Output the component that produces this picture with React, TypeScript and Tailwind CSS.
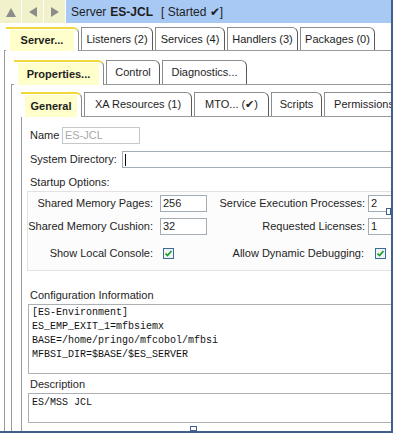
const tabRow1 = [
  { label: 'Server...', w: 'w-[73px]', selected: true },
  { label: 'Listeners (2)', w: 'w-[72px]' },
  { label: 'Services (4)', w: 'w-[70px]' },
  { label: 'Handlers (3)', w: 'w-[71px]' },
  { label: 'Packages (0)', w: 'w-[75px]' },
];

const tabRow2 = [
  { label: 'Properties...', w: 'w-[90px]', selected: true },
  { label: 'Control', w: 'w-[54px]' },
  { label: 'Diagnostics...', w: 'w-[85px]' },
];

const tabRow3 = [
  { label: 'General', w: 'w-[61px]', selected: true },
  { label: 'XA Resources (1)', w: 'w-[108px]' },
  { label: 'MTO... (✔)', w: 'w-[75px]' },
  { label: 'Scripts', w: 'w-[51px]' },
  { label: 'Permissions', w: 'w-[80px]' },
];

const configLines = [
  '[ES-Environment]',
  'ES_EMP_EXIT_1=mfbsiemx',
  'BASE=/home/pringo/mfcobol/mfbsi',
  'MFBSI_DIR=$BASE/$ES_SERVER',
];

type TabDef = { label: string; w: string; selected?: boolean };

function Tab({ tab }: { tab: TabDef }) {
  if (tab.selected) {
    return (
      <div
        className={`${tab.w} relative z-10 -mb-px shrink-0 bg-white border-t-2 border-t-[#efd83a] border-r border-r-[#8a8a8a] rounded-tr-[6px] px-[4px] pt-[1px]`}
      >
        <div className="h-full bg-[#ffffcc] flex items-center justify-center font-bold whitespace-nowrap">
          {tab.label}
        </div>
      </div>
    );
  }
  return (
    <div
      className={`${tab.w} shrink-0 bg-white border-l border-t border-r border-[#8c8c8c] border-r-[#5a5a5a] rounded-tr-[6px] flex items-center justify-center whitespace-nowrap`}
    >
      {tab.label}
    </div>
  );
}

function CheckBox() {
  return (
    <svg width="11" height="11" viewBox="0 0 11 11" className="shrink-0">
      <rect x="0.5" y="0.5" width="10" height="10" fill="#eef3f8" stroke="#3d6a96" />
      <path d="M2.5 5.5 L4.5 7.5 L8.5 3" fill="none" stroke="#1c9a1c" strokeWidth="1.6" />
    </svg>
  );
}

function NumInput({ value }: { value: string }) {
  return (
    <div className="w-[47px] h-[17px] shrink-0 border border-[#a4acb4] bg-white pl-[2px] flex items-center">
      {value}
    </div>
  );
}

function NavButton({ dir }: { dir: 'up' | 'left' | 'right' }) {
  const d =
    dir === 'up' ? 'M1 11 L6 2 L11 11 Z' : dir === 'left' ? 'M10 1 L2 6 L10 11 Z' : 'M2 1 L10 6 L2 11 Z';
  return (
    <div className="w-[22px] bg-[#f1f1cb] border-r border-white flex items-center justify-center">
      <svg width="12" height="12" viewBox="0 0 12 12">
        <path d={d} fill="#8c8c8c" />
      </svg>
    </div>
  );
}

export default function App() {
  return (
    <div className="relative w-[393px] h-[433px] overflow-hidden bg-white border-r-2 border-b-2 border-[#3f5f8f] flex flex-col font-['Liberation_Sans',Arial,sans-serif] text-[11px] text-[#1e1e1e]">
      {/* title bar */}
      <div className="h-[23px] shrink-0 flex">
        <NavButton dir="up" />
        <NavButton dir="left" />
        <NavButton dir="right" />
        <div className="flex-1 bg-[#a9c9f5] flex items-center pl-[5px] text-[12px] whitespace-nowrap">
          <span>Server</span>
          <span className="font-bold ml-[4px]">ES-JCL</span>
          <span className="ml-[8px]">[ Started ✔]</span>
        </div>
      </div>

      {/* level 1 */}
      <div className="flex-1 min-h-0 flex flex-col pl-[4px] pt-[4px]">
        <div className="h-[23px] shrink-0 flex gap-[2px] ml-[2px]">
          {tabRow1.map((t) => (
            <Tab key={t.label} tab={t} />
          ))}
        </div>
        <div className="flex-1 min-h-0 flex flex-col border-l border-t border-[#9a9a9a] pl-[6px] pt-[9px]">
          {/* level 2 */}
          <div className="h-[24px] shrink-0 flex gap-[2px] ml-[3px]">
            {tabRow2.map((t) => (
              <Tab key={t.label} tab={t} />
            ))}
          </div>
          <div className="flex-1 min-h-0 flex flex-col border-l border-t border-[#9a9a9a] pl-[9px] pt-[7px]">
            {/* level 3 */}
            <div className="h-[24px] shrink-0 flex gap-[2px]">
              {tabRow3.map((t) => (
                <Tab key={t.label} tab={t} />
              ))}
            </div>
            <div className="flex-1 min-h-0 border-l border-t border-[#9a9a9a] pl-[6px] pt-[10px]">
              <div className="w-[420px] flex flex-col">
                <div className="h-[17px] flex items-center">
                  <span className="w-[34px] pl-[2px]">Name</span>
                  <div className="w-[78px] h-[17px] border border-[#c4c8cc] text-[#a8a8a8] pl-[2px] flex items-center">
                    ES-JCL
                  </div>
                </div>
                <div className="h-[17px] mt-[7px] flex items-center">
                  <span className="w-[94px] pl-[2px] whitespace-nowrap">System Directory:</span>
                  <div className="flex-1 h-[17px] border border-[#a4acb4] pl-[2px] flex items-center">
                    <div className="w-px h-[12px] bg-black" />
                  </div>
                </div>
                <div className="h-[14px] mt-[7px] pl-[2px] flex items-center">Startup Options:</div>

                <div className="mt-[2px] -ml-px border border-[#e2e2e2] bg-[#fcfcfc] pt-[3px] pb-[10px] flex flex-col">
                  <div className="h-[17px] flex items-center whitespace-nowrap">
                    <span className="w-[125px] text-right">Shared Memory Pages:</span>
                    <div className="ml-[7px]">
                      <NumInput value="256" />
                    </div>
                    <span className="w-[158px] text-right">Service Execution Processes:</span>
                    <div className="ml-[3px]">
                      <NumInput value="2" />
                    </div>
                  </div>
                  <div className="h-[17px] mt-[6px] flex items-center whitespace-nowrap">
                    <span className="w-[125px] text-right">Shared Memory Cushion:</span>
                    <div className="ml-[7px]">
                      <NumInput value="32" />
                    </div>
                    <span className="w-[158px] text-right">Requested Licenses:</span>
                    <div className="ml-[3px]">
                      <NumInput value="1" />
                    </div>
                  </div>
                  <div className="h-[13px] mt-[12px] flex items-center whitespace-nowrap">
                    <span className="w-[125px] text-right">Show Local Console:</span>
                    <div className="ml-[10px]">
                      <CheckBox />
                    </div>
                    <span className="w-[190px] text-right">Allow Dynamic Debugging:</span>
                    <div className="ml-[11px]">
                      <CheckBox />
                    </div>
                  </div>
                </div>

                <div className="h-[14px] mt-[17px] pl-[2px] flex items-center">Configuration Information</div>
                <div className="h-[70px] mt-[2px] border border-[#aab0b4] pt-[1px] pl-[3px] font-['Liberation_Mono','Courier_New',monospace] text-[10px] leading-[14px] text-[#111]">
                  {configLines.map((l) => (
                    <div key={l} className="whitespace-pre">
                      {l}
                    </div>
                  ))}
                </div>
                <div className="h-[14px] mt-[3px] pl-[2px] flex items-center">Description</div>
                <div className="h-[30px] mt-[2px] border border-[#aab0b4] pt-[2px] pl-[3px] font-['Liberation_Mono','Courier_New',monospace] text-[10px] leading-[14px] text-[#111]">
                  ES/MSS JCL
                </div>
              </div>
            </div>
          </div>
        </div>
      </div>

      {/* resize handles */}
      <div className="absolute left-[190px] bottom-0 w-[7px] h-[5px] bg-white border border-[#3f5f8f]" />
      <div className="absolute right-0 top-[208px] w-[5px] h-[7px] bg-white border border-[#3f5f8f]" />
    </div>
  );
}
